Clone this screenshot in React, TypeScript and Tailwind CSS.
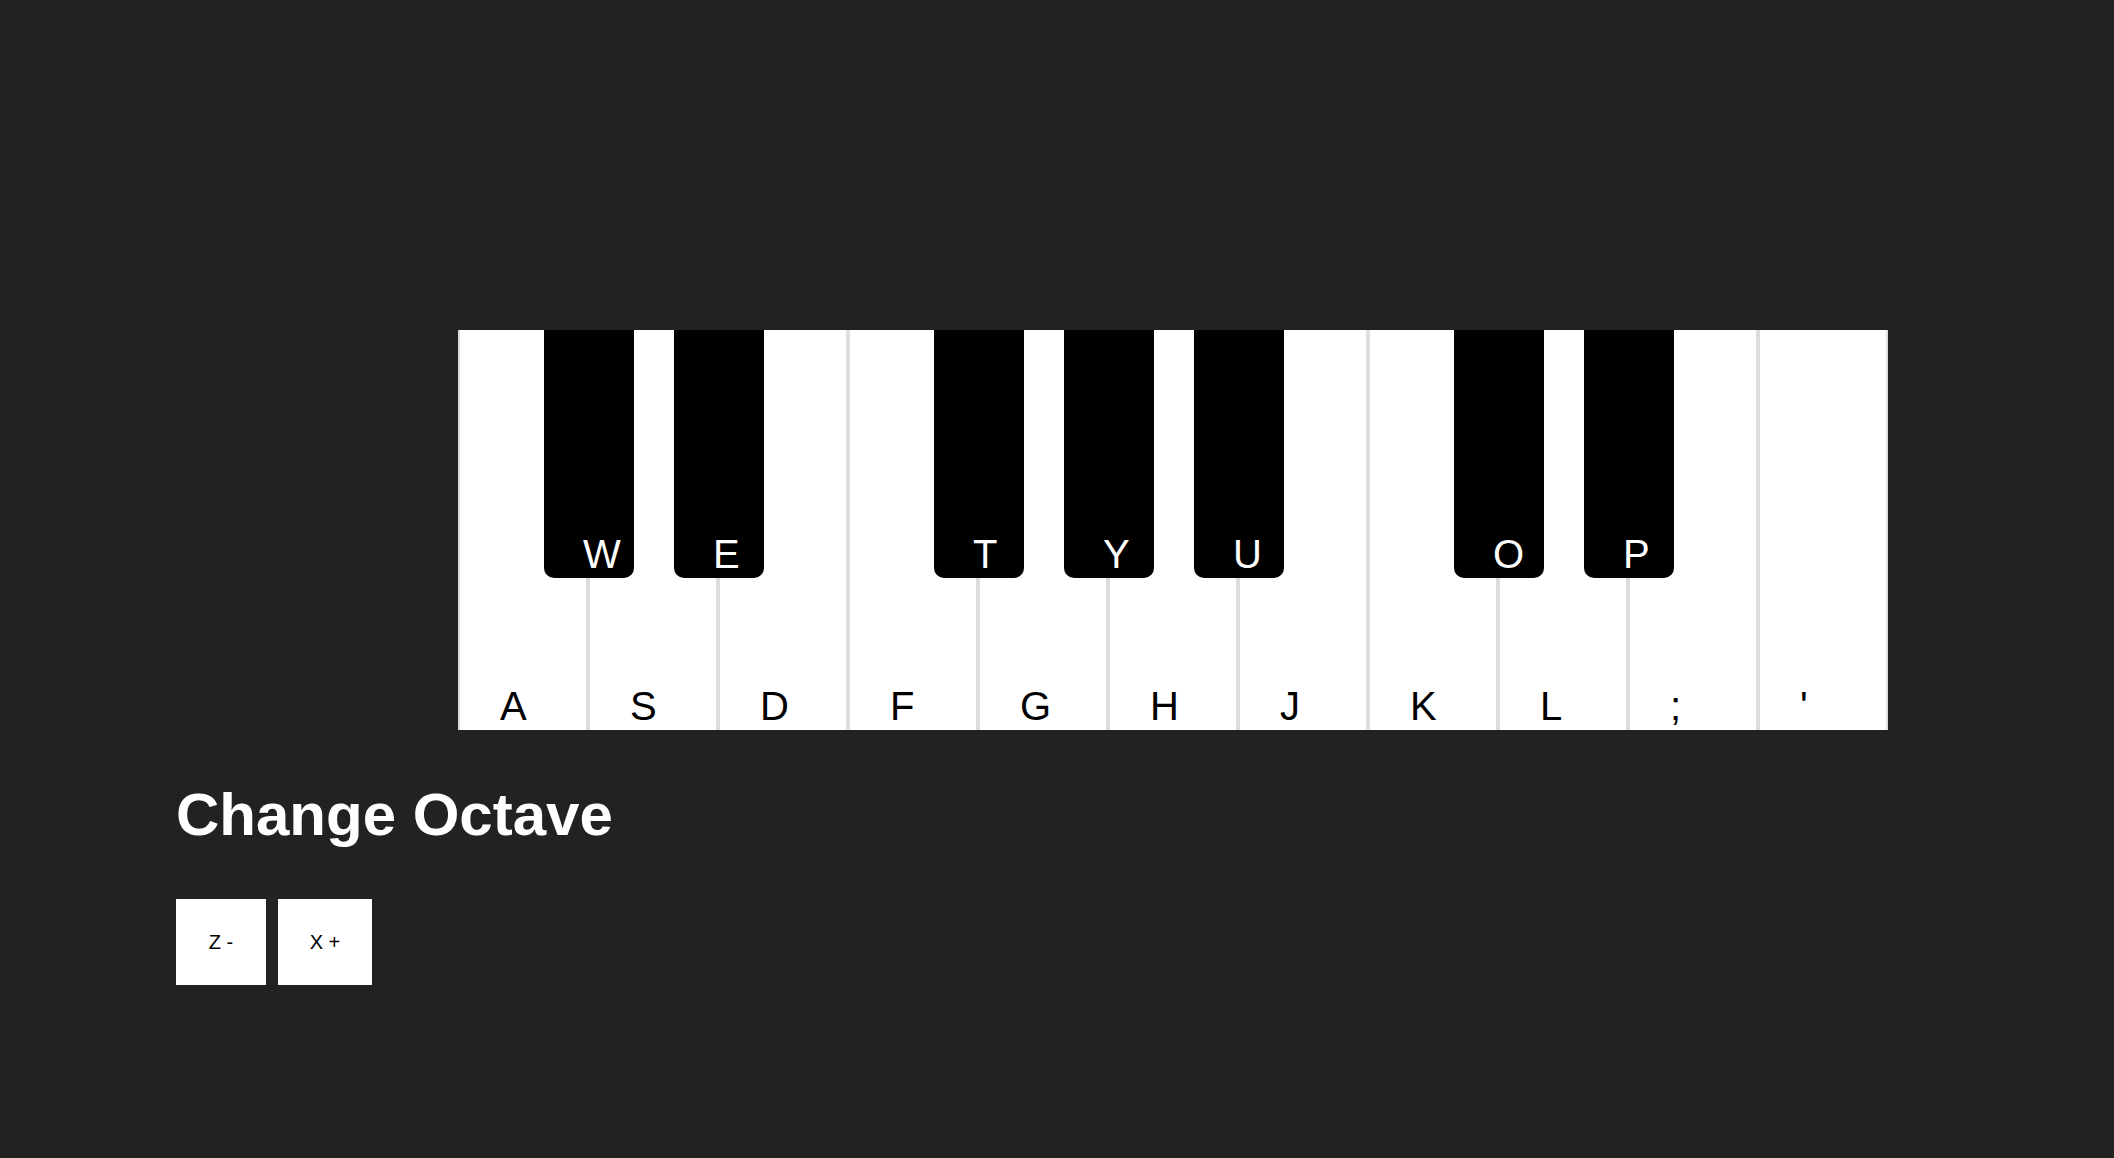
import React from 'react';

const whiteKeys = ['A', 'S', 'D', 'F', 'G', 'H', 'J', 'K', 'L', ';', "'"];

// black key label + the white key it sits after
const blackKeys = [
  { label: 'W', after: 0 },
  { label: 'E', after: 1 },
  { label: 'T', after: 3 },
  { label: 'Y', after: 4 },
  { label: 'U', after: 5 },
  { label: 'O', after: 7 },
  { label: 'P', after: 8 },
];

const blackLeft = ['left-[86px]', 'left-[216px]', 'left-[476px]', 'left-[606px]', 'left-[736px]', 'left-[996px]', 'left-[1126px]'];

const Piano: React.FC = () => {
  return (
    <div className="relative ml-[282px] flex h-[400px] w-[1430px]">
      {whiteKeys.map((k) => (
        <div
          key={k}
          className="flex h-full w-[130px] items-end border-x-2 border-[#dddddd] bg-white pb-[4px] pl-[40px] text-[40px] leading-none text-black"
        >
          {k}
        </div>
      ))}
      {blackKeys.map((b, i) => (
        <div
          key={b.label}
          className={`absolute top-0 ${blackLeft[i]} flex h-[248px] w-[90px] items-end rounded-b-[10px] bg-black pb-[4px] pl-[39px] text-[40px] leading-none text-white`}
        >
          {b.label}
        </div>
      ))}
    </div>
  );
};

const App: React.FC = () => {
  return (
    <div className="min-h-screen bg-[#222222] pl-[176px] pt-[330px] font-['Liberation_Sans',Arial,sans-serif]">
      <Piano />
      <h1 className="mt-[55px] text-[60px] font-bold leading-none text-white">Change Octave</h1>
      <div className="mt-[54px] flex gap-[12px]">
        <button className="w-[90px] bg-white py-[32px] text-[20px] leading-[22px] text-black">Z -</button>
        <button className="w-[94px] bg-white py-[32px] text-[20px] leading-[22px] text-black">X +</button>
      </div>
    </div>
  );
};

export default App;
